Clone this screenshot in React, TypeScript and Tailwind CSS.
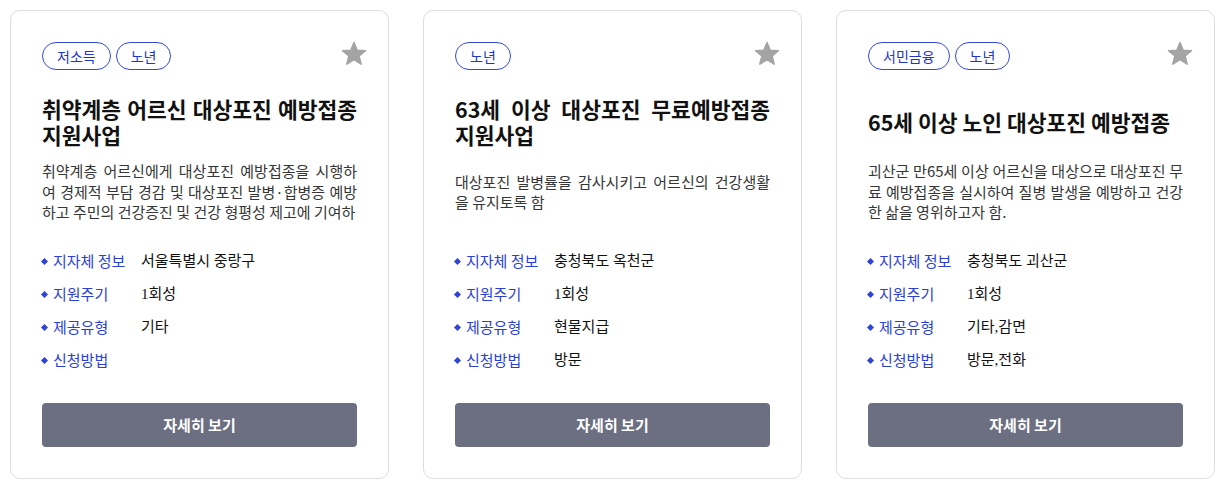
type Program = {
  tags: string[];
  title: string;
  desc: string;
  info: { label: string; value: string }[];
};

const programs: Program[] = [
  {
    tags: ["저소득", "노년"],
    title: "취약계층 어르신 대상포진 예방접종 지원사업",
    desc: "취약계층 어르신에게 대상포진 예방접종을 시행하여 경제적 부담 경감 및 대상포진 발병·합병증 예방하고 주민의 건강증진 및 건강 형평성 제고에 기여하",
    info: [
      { label: "지자체 정보", value: "서울특별시 중랑구" },
      { label: "지원주기", value: "1회성" },
      { label: "제공유형", value: "기타" },
      { label: "신청방법", value: "" },
    ],
  },
  {
    tags: ["노년"],
    title: "63세  이상  대상포진  무료예방접종 지원사업",
    desc: "대상포진 발병률을 감사시키고 어르신의 건강생활을 유지토록 함",
    info: [
      { label: "지자체 정보", value: "충청북도 옥천군" },
      { label: "지원주기", value: "1회성" },
      { label: "제공유형", value: "현물지급" },
      { label: "신청방법", value: "방문" },
    ],
  },
  {
    tags: ["서민금융", "노년"],
    title: "65세 이상 노인 대상포진 예방접종",
    desc: "괴산군 만65세 이상 어르신을 대상으로 대상포진 무료 예방접종을 실시하여 질병 발생을 예방하고 건강한 삶을 영위하고자 함.",
    info: [
      { label: "지자체 정보", value: "충청북도 괴산군" },
      { label: "지원주기", value: "1회성" },
      { label: "제공유형", value: "기타,감면" },
      { label: "신청방법", value: "방문,전화" },
    ],
  },
];

const StarIcon = () => (
  <svg width="28" height="28" viewBox="0 0 28 28">
    <polygon
      points="14,2.5 17.2,10.2 25.5,10.7 19.1,16 21.2,24.2 14,19.7 6.8,24.2 8.9,16 2.5,10.7 10.8,10.2"
      fill="#a4a4a4"
      stroke="#a4a4a4"
      strokeWidth="1.5"
      strokeLinejoin="round"
    />
  </svg>
);

const ProgramCard = ({ program }: { program: Program }) => (
  <div className="relative bg-white border border-[#dddddd] rounded-[10px] px-[31px] pt-[31px] pb-[31px]">
    <div className="absolute top-[29px] right-[20px]">
      <StarIcon />
    </div>

    <div className="flex gap-[5px]">
      {program.tags.map((tag) => (
        <span
          key={tag}
          className="h-[28px] px-[14px] flex items-center rounded-full border border-[#3448d8] text-[14px] text-[#2236cc]"
        >
          {tag}
        </span>
      ))}
    </div>

    <div className="mt-[26px] h-[52px] flex items-center">
      <h3 className="w-full text-[21.5px] leading-[26px] font-bold text-[#111111] text-justify">
        {program.title}
      </h3>
    </div>

    <div className="mt-[13px] h-[62px] flex flex-col justify-center">
      <p className="text-[15px] leading-[20.5px] text-[#363636] text-justify">
        {program.desc}
      </p>
    </div>

    <ul className="mt-[28px] flex flex-col gap-[13px] font-['Liberation_Serif','Noto_Sans_CJK_KR',serif] text-[15px] leading-[20px]">
      {program.info.map((row) => (
        <li key={row.label} className="flex items-center">
          <span className="w-[5px] h-[5px] rotate-45 bg-[#2f44d6]" />
          <span className="ml-[6px] w-[88px] text-[#2b3fd2] font-['Noto_Sans_CJK_KR',sans-serif]">
            {row.label}
          </span>
          <span className="text-[#111111]">{row.value}</span>
        </li>
      ))}
    </ul>

    <button className="mt-[33px] w-full h-[44px] rounded-[4px] bg-[#6c6e81] text-white text-[15px] font-bold">
      자세히 보기
    </button>
  </div>
);

export default function App() {
  return (
    <div className="min-h-screen bg-white px-[10px] pt-[10px] font-['Noto_Sans_CJK_KR','Noto_Sans',sans-serif]">
      <div className="grid grid-cols-3 gap-[34px]">
        {programs.map((p, i) => (
          <ProgramCard key={i} program={p} />
        ))}
      </div>
    </div>
  );
}
